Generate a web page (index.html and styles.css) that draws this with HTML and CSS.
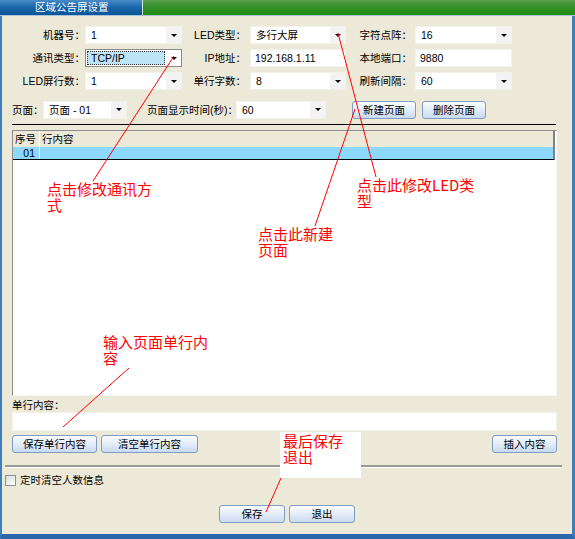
FILE: index.html
```html
<!DOCTYPE html>
<html lang="zh">
<head>
<meta charset="utf-8">
<title>区域公告屏设置</title>
<link rel="stylesheet" href="styles.css">
</head>
<body>
<div class="window">
  <div class="titlebar">
    <div class="title-left">区域公告屏设置</div>
    <div class="title-right"></div>
  </div>
  <div class="frame">
    <div class="form">
      <div class="lbl l1">机器号：</div>
      <div class="combo"><span class="val">1</span><span class="arrow"></span></div>
      <div class="lbl l2">LED类型：</div>
      <div class="combo"><span class="val">多行大屏</span><span class="arrow"></span></div>
      <div class="lbl l3">字符点阵：</div>
      <div class="combo"><span class="val">16</span><span class="arrow"></span></div>

      <div class="lbl l1">通讯类型：</div>
      <div class="combo focus"><span class="val"><span class="sel">TCP/IP</span></span><span class="arrow"></span></div>
      <div class="lbl l2">IP地址：</div>
      <div class="textbox">192.168.1.11</div>
      <div class="lbl l3">本地端口：</div>
      <div class="textbox">9880</div>

      <div class="lbl l1">LED屏行数：</div>
      <div class="combo"><span class="val">1</span><span class="arrow"></span></div>
      <div class="lbl l2">单行字数：</div>
      <div class="combo"><span class="val">8</span><span class="arrow"></span></div>
      <div class="lbl l3">刷新间隔：</div>
      <div class="combo"><span class="val">60</span><span class="arrow"></span></div>
    </div>

    <div class="page-row">
      <div class="plbl">页面：</div>
      <div class="combo page-combo"><span class="val">页面 - 01</span><span class="arrow"></span></div>
      <div class="plbl time-lbl">页面显示时间(秒)：</div>
      <div class="combo time-combo"><span class="val">60</span><span class="arrow"></span></div>
      <div class="btn new-btn">新建页面</div>
      <div class="btn del-btn">删除页面</div>
    </div>

    <div class="topline"></div>
    <div class="grid">
      <div class="grid-head">
        <div class="c-no">序号</div>
        <div class="c-text">行内容</div>
      </div>
      <div class="grid-row">
        <div class="c-no num">01</div>
        <div class="c-text"></div>
      </div>
    </div>

    <div class="content-lbl">单行内容：</div>
    <div class="content-input"></div>

    <div class="btn-row">
      <div class="btn w85">保存单行内容</div>
      <div class="btn w97">清空单行内容</div>
      <div class="spacer"></div>
      <div class="btn w65">插入内容</div>
    </div>

    <div class="sep"></div>

    <div class="check-row">
      <span class="checkbox"></span>
      <span class="check-lbl">定时清空人数信息</span>
    </div>

    <div class="bottom-row">
      <div class="btn w66">保存</div>
      <div class="btn w66">退出</div>
    </div>
  </div>

  <svg class="annot-lines" width="575" height="539" viewBox="0 0 575 539">
    <line x1="174" y1="56" x2="93" y2="181"/>
    <line x1="338" y1="33" x2="376" y2="177"/>
    <line x1="355" y1="109" x2="315" y2="226"/>
    <line x1="129" y1="368" x2="63" y2="427"/>
    <line x1="281" y1="478" x2="266" y2="512"/>
  </svg>
  <div class="note n1"><div class="nl">点击修改通讯方</div><div class="nl">式</div></div>
  <div class="note n2"><div class="nl">点击此修改LED类</div><div class="nl">型</div></div>
  <div class="note n3"><div class="nl">点击此新建</div><div class="nl">页面</div></div>
  <div class="note n4"><div class="nl">输入页面单行内</div><div class="nl">容</div></div>
  <div class="note n5"><div class="nl">最后保存</div><div class="nl">退出</div></div>
</div>
</body>
</html>
```
FILE: styles.css
```css
* { box-sizing: border-box; }
body {
  margin: 0;
  background: #ECE9D8;
  font-family: "Liberation Sans", "Noto Sans CJK SC", sans-serif;
  font-size: 10.5px;
  color: #000;
}
.window {
  position: relative;
  width: 575px;
  height: 539px;
  overflow: hidden;
  background: #ECE9D8;
}
.titlebar {
  display: flex;
  height: 16px;
  border-bottom: 1px solid #A8C4DE;
}
.title-left {
  width: 143px;
  padding-left: 35px;
  color: #fff;
  font-family: "Noto Sans CJK SC", sans-serif;
  font-size: 10.5px;
  line-height: 14px;
  background: linear-gradient(#4A8BC7, #1B68AC 45%, #0C5596);
  border-right: 1px solid #D8E8D0;
}
.title-right {
  flex: 1;
  background: linear-gradient(#5A9E4E, #3A9230 40%, #1F8B10);
}
.frame {
  height: 523px;
  border-left: 2px solid #3D7DB8;
  border-right: 3px solid #3D7DB8;
  border-bottom: 5px solid #2A68AA;
  padding-top: 10px;
}
.form {
  display: grid;
  grid-template-columns: 83px 97px 68px 96px 69px 97px;
  grid-auto-rows: 18px;
  row-gap: 5px;
}
.lbl {
  text-align: right;
  line-height: 18px;
  white-space: nowrap;
}
.l1 { padding-right: 0; }
.l2 { padding-right: 4px; }
.l3 { padding-right: 3px; }
.combo {
  display: flex;
  background: #fff;
  border: 1px solid #F3F1E8;
  height: 18px;
}
.combo .val {
  flex: 1;
  padding-left: 5px;
  line-height: 16px;
  white-space: nowrap;
}
.combo .arrow {
  width: 15px;
  background: #F3F3F3;
  display: flex;
  align-items: center;
  justify-content: center;
}
.combo .arrow::after {
  content: "";
  width: 0;
  height: 0;
  border-left: 3px solid transparent;
  border-right: 3px solid transparent;
  border-top: 3px solid #000;
}
.combo.focus {
  border: 1px solid #8A8A8A;
}
.combo.focus .val {
  padding: 1px;
}
.combo.focus .sel {
  display: block;
  height: 14px;
  line-height: 12px;
  padding-left: 3px;
  background: #BEE4F8;
  border: 1px dotted #333;
}
.combo.focus .arrow {
  background: #fff;
}
.textbox {
  background: #fff;
  border: 1px solid #F3F1E8;
  padding-left: 4px;
  line-height: 16px;
}
.page-row {
  display: flex;
  align-items: center;
  height: 19px;
  margin-top: 10px;
  padding-left: 10px;
}
.plbl {
  line-height: 18px;
  white-space: nowrap;
}
.plbl:first-child { width: 31px; }
.page-combo { width: 84px; }
.time-lbl { width: 89px; margin-left: 20px; }
.time-combo { width: 90px; }
.btn {
  height: 18px;
  line-height: 16px;
  text-align: center;
  border: 1px solid #7E9DC0;
  border-radius: 3px;
  background: linear-gradient(#FBFCFE, #E6EEF9 45%, #C9DAF2);
  white-space: nowrap;
  font-family: "Noto Sans CJK SC", sans-serif;
}
.new-btn { width: 64px; margin-left: 26px; }
.del-btn { width: 64px; margin-left: 6px; }
.topline {
  margin: 5px 0 0 10px;
  width: 544px;
  height: 6px;
  border-top: 1px solid #000;
}
.grid {
  margin-left: 10px;
  width: 545px;
  height: 266px;
  background: #fff;
  border-top: 1px solid #8C8C8C;
  border-left: 1px solid #8C8C8C;
  border-right: 1px solid #F6F6F6;
  border-bottom: 1px solid #F6F6F6;
}
.grid-head, .grid-row {
  display: flex;
  width: 542px;
  border-right: 2px solid #808080;
}
.grid-head {
  height: 16px;
  background: #ECE9D8;
  line-height: 16px;
}
.grid-row {
  height: 13px;
  background: #8CD8FE;
  border-bottom: 1px solid #000;
  line-height: 12px;
}
.c-no {
  width: 27px;
  padding-left: 2px;
  border-right: 1px solid #fff;
}
.c-no.num {
  text-align: right;
  padding-right: 4px;
}
.c-text {
  flex: 1;
  padding-left: 2px;
}
.content-lbl {
  margin-top: 2px;
  padding-left: 10px;
  height: 14px;
  line-height: 14px;
}
.content-input {
  margin-left: 10px;
  width: 545px;
  height: 19px;
  background: #fff;
  border: 1px solid #F3F1E8;
}
.btn-row {
  display: flex;
  margin-top: 4px;
  padding: 0 15px 0 10px;
  gap: 4px;
}
.spacer { flex: 1; }
.w85 { width: 85px; }
.w97 { width: 97px; }
.w65 { width: 65px; }
.w66 { width: 66px; }
.sep {
  margin: 12px 0 0 3px;
  width: 557px;
  height: 3px;
  border-top: 2px solid #9A9A94;
  border-bottom: 1px solid #fff;
}
.check-row {
  display: flex;
  align-items: center;
  margin-top: 6px;
  padding-left: 3px;
  height: 12px;
}
.checkbox {
  width: 11px;
  height: 11px;
  border: 1px solid #8E8F8F;
  background: linear-gradient(135deg, #DCDCD7, #FFFFFF);
}
.check-lbl {
  margin-left: 4px;
  line-height: 12px;
}
.bottom-row {
  display: flex;
  justify-content: center;
  gap: 4px;
  margin-top: 19px;
}
.annot-lines {
  position: absolute;
  left: 0;
  top: 0;
  pointer-events: none;
}
.annot-lines line {
  stroke: #FF0000;
  stroke-width: 1;
}
.note {
  position: absolute;
  color: #FF0000;
  font-family: "Noto Sans CJK SC", sans-serif;
  font-size: 15px;
  white-space: nowrap;
}
.nl {
  height: 16px;
  line-height: 16px;
}
.n1 { left: 47px; top: 181px; }
.n2 { left: 357px; top: 177px; }
.n3 { left: 258px; top: 226px; }
.n4 { left: 103px; top: 334px; }
.n5 {
  left: 280px;
  top: 432px;
  width: 81px;
  height: 46px;
  padding: 1px 0 0 3px;
  background: #fff;
}
```
